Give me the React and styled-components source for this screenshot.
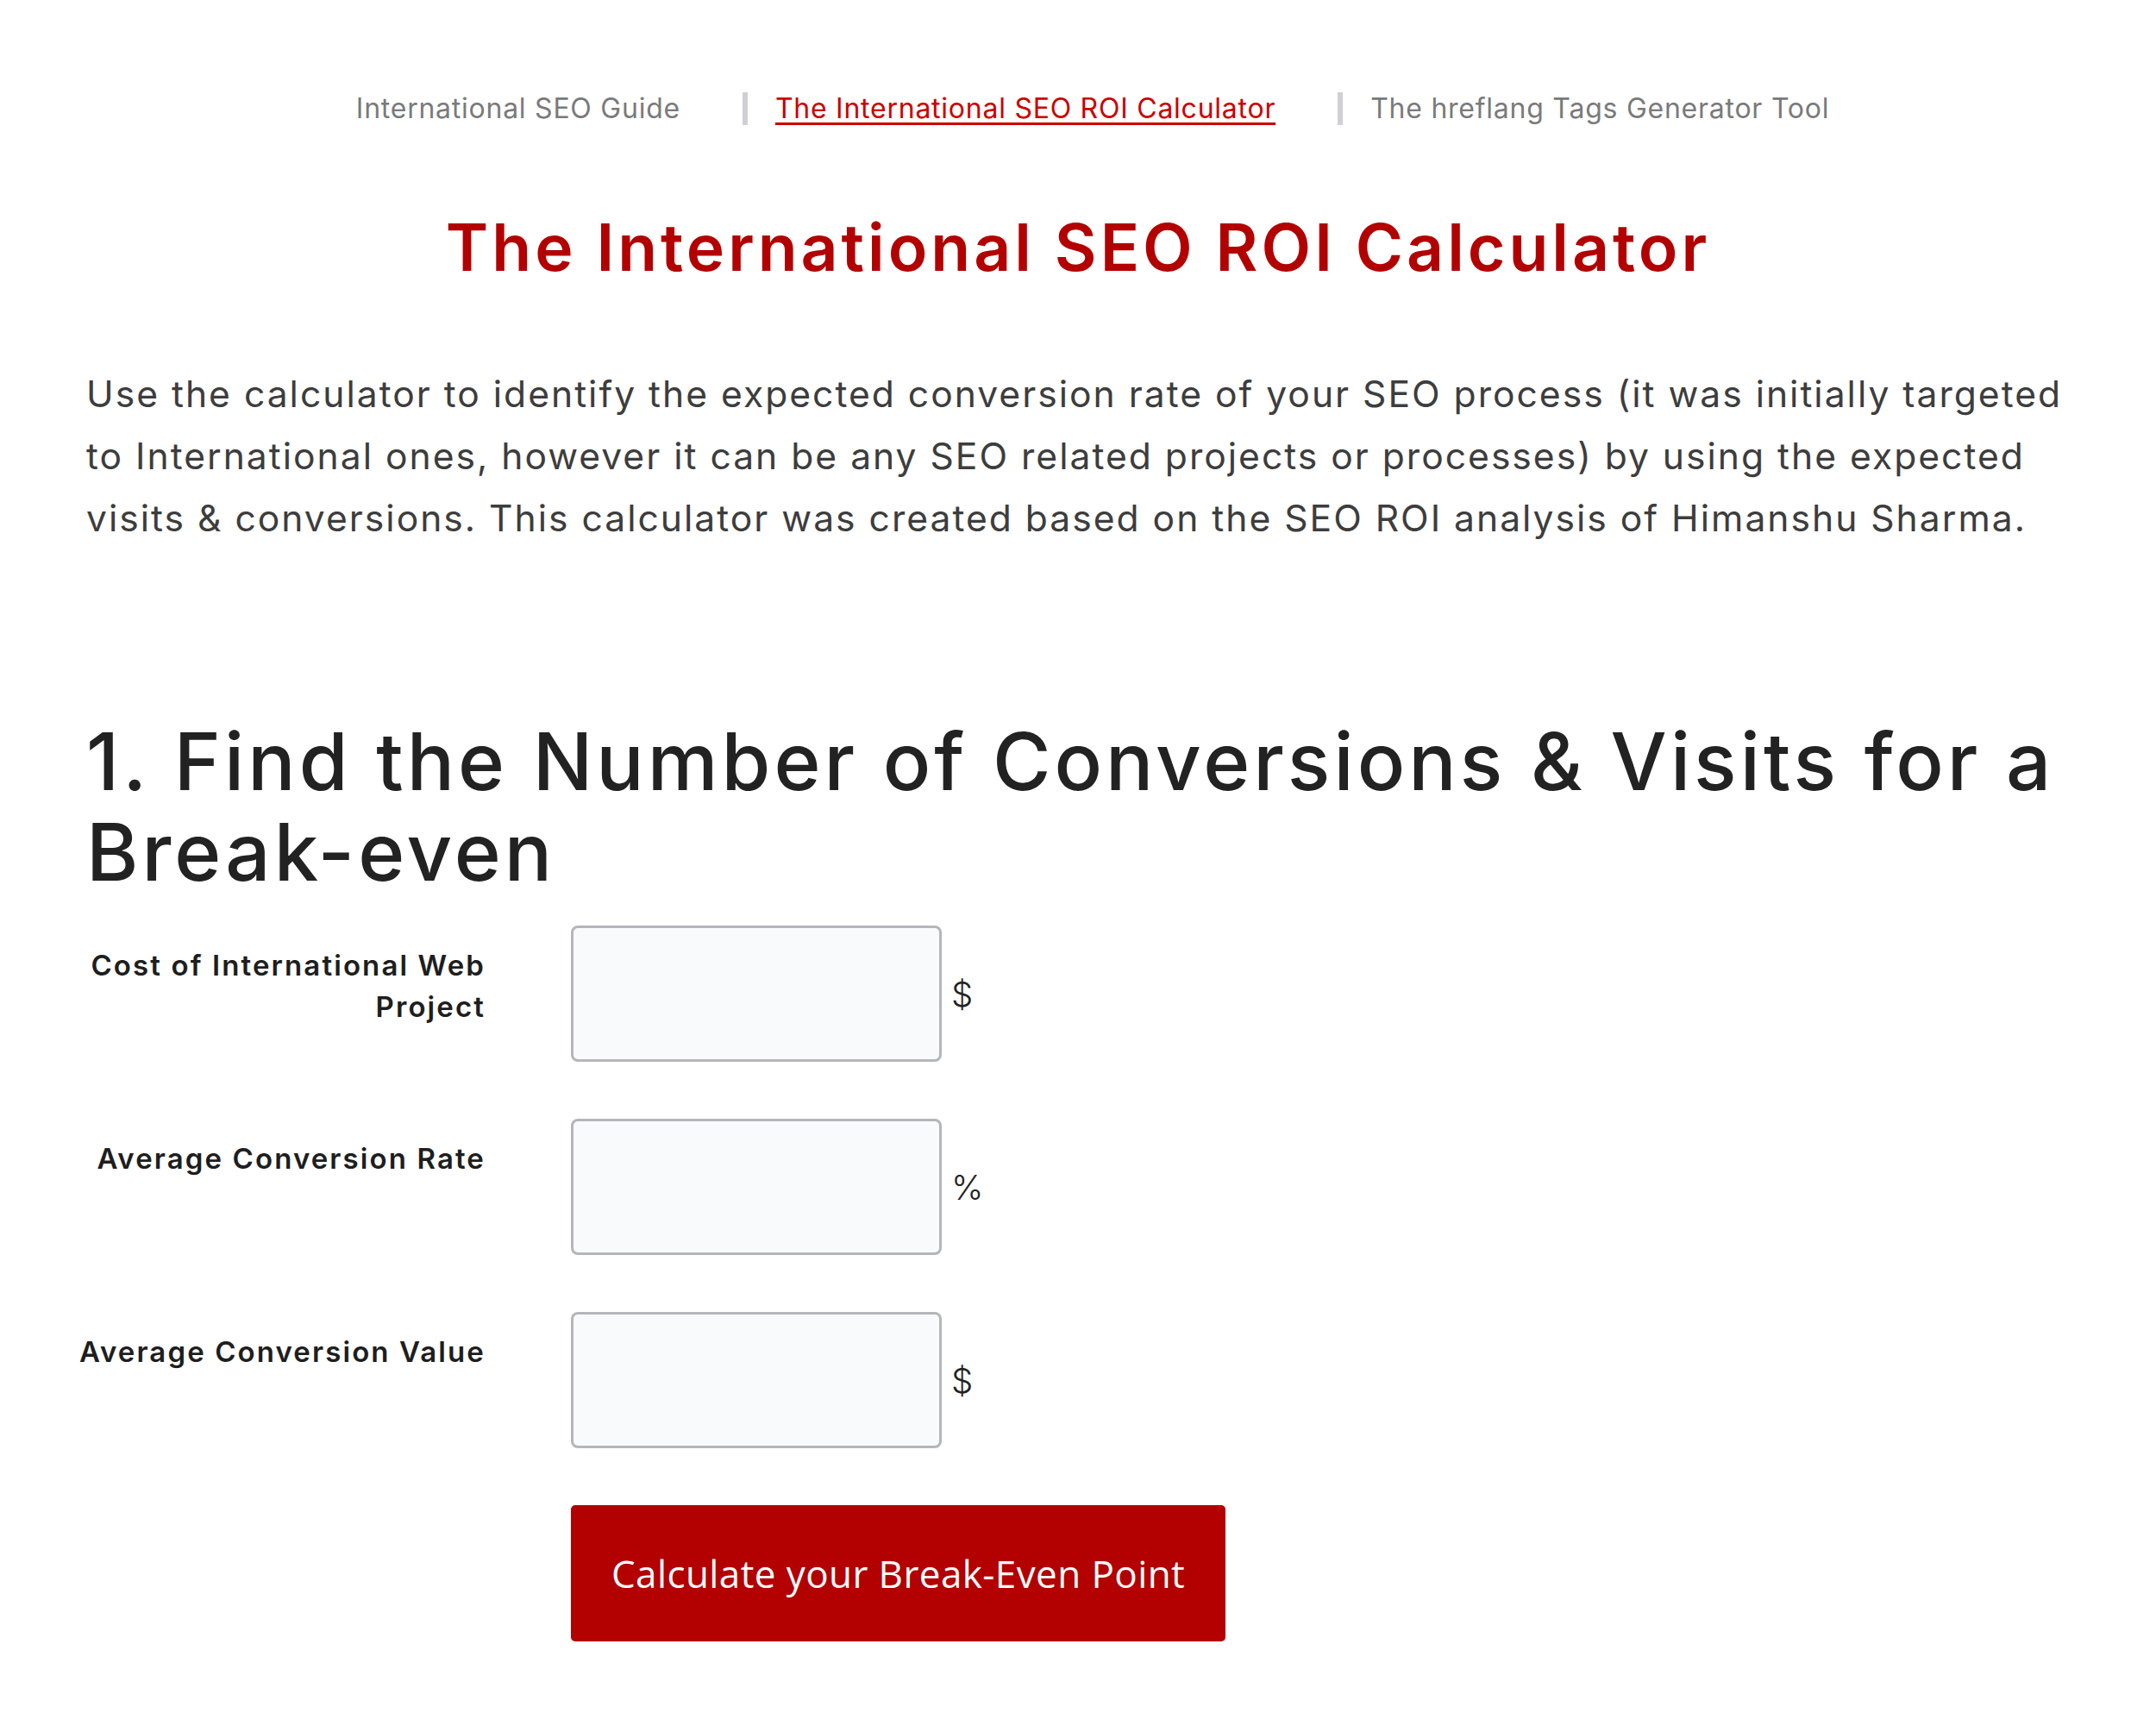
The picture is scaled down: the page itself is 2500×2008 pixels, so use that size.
import React from "react";
import styled, { createGlobalStyle } from "styled-components";

const GlobalStyle = createGlobalStyle`
  html, body {
    margin: 0;
    padding: 0;
    background: #ffffff;
  }
  body {
    font-family: Inter, "Liberation Sans", sans-serif;
    color: #222222;
  }
  * {
    box-sizing: border-box;
  }
`;

const Page = styled.main`
  padding: 0 100px 100px;
`;

const Nav = styled.nav`
  display: flex;
  justify-content: center;
  align-items: center;
  padding: 102px 0 0 34px;
`;

const NavLink = styled.a`
  font-size: 32px;
  line-height: 48px;
  font-weight: 400;
  letter-spacing: 0.75px;
  white-space: nowrap;
  color: ${(p) => (p.$active ? "#cc0000" : "#7a7a7a")};
  text-decoration: ${(p) => (p.$active ? "underline" : "none")};
  text-decoration-thickness: 3px;
  text-underline-offset: 5px;
  cursor: pointer;
`;

const NavDivider = styled.span`
  display: block;
  width: 6px;
  height: 38px;
  background: #d0d0d4;
  margin: 0 32px 0 72px;
`;

const Title = styled.h1`
  margin: 91px 0 0;
  text-align: center;
  font-size: 75px;
  line-height: 92px;
  font-weight: 600;
  letter-spacing: 4px;
  color: #b30000;
`;

const Intro = styled.p`
  margin: 88px 0 0;
  font-size: 42.6px;
  line-height: 72px;
  font-weight: 400;
  letter-spacing: 2px;
  color: #3d3d3d;
  white-space: nowrap;
`;

const SectionTitle = styled.h2`
  margin: 193px 0 0;
  font-size: 92px;
  line-height: 105px;
  font-weight: 500;
  letter-spacing: 4.05px;
  color: #222222;
  white-space: nowrap;
`;

const Form = styled.form`
  display: grid;
  grid-template-columns: 461px auto;
  column-gap: 101px;
  row-gap: 66px;
  margin-top: 33px;
  align-items: start;
`;

const Label = styled.label`
  justify-self: end;
  text-align: right;
  padding-top: 22px;
  margin-right: -2px;
  font-size: 33px;
  line-height: 48px;
  font-weight: 600;
  letter-spacing: 2.1px;
  color: #1e1e1e;
  white-space: nowrap;
`;

const Field = styled.div`
  display: flex;
  align-items: center;
  gap: 11px;
`;

const Input = styled.input`
  width: 430px;
  height: 158px;
  border: 3px solid #b4b6bb;
  border-radius: 8px;
  background: #f9fafc;
  font-size: 34px;
  padding: 0 20px;
  outline: none;
`;

const Unit = styled.span`
  font-size: 40px;
  font-weight: 300;
  color: #222222;
`;

const SubmitButton = styled.button`
  grid-column: 2;
  justify-self: start;
  height: 158px;
  padding: 0 47px;
  border: none;
  border-radius: 5px;
  background: #b30000;
  color: #ffffff;
  font-family: "Open Sans", "Liberation Sans", sans-serif;
  font-size: 44px;
  font-weight: 400;
  letter-spacing: 0.4px;
  cursor: pointer;
`;

const fields = [
  { id: "cost", label: ["Cost of International Web", "Project"], unit: "$" },
  { id: "rate", label: ["Average Conversion Rate"], unit: "%" },
  { id: "value", label: ["Average Conversion Value"], unit: "$" },
];

export default function App() {
  return (
    <>
      <GlobalStyle />
      <Page>
        <Nav>
          <NavLink>International SEO Guide</NavLink>
          <NavDivider />
          <NavLink $active>The International SEO ROI Calculator</NavLink>
          <NavDivider />
          <NavLink>The hreflang Tags Generator Tool</NavLink>
        </Nav>

        <Title>The International SEO ROI Calculator</Title>

        <Intro>
          Use the calculator to identify the expected conversion rate of your SEO process (it was initially targeted
          <br />
          to International ones, however it can be any SEO related projects or processes) by using the expected
          <br />
          visits &amp; conversions. This calculator was created based on the SEO ROI analysis of Himanshu Sharma.
        </Intro>

        <SectionTitle>
          1. Find the Number of Conversions &amp; Visits for a
          <br />
          Break-even
        </SectionTitle>

        <Form onSubmit={(e) => e.preventDefault()}>
          {fields.map((f) => (
            <React.Fragment key={f.id}>
              <Label htmlFor={f.id}>
                {f.label.map((line, i) => (
                  <React.Fragment key={line}>
                    {i > 0 && <br />}
                    {line}
                  </React.Fragment>
                ))}
              </Label>
              <Field>
                <Input id={f.id} type="text" />
                <Unit>{f.unit}</Unit>
              </Field>
            </React.Fragment>
          ))}
          <SubmitButton type="submit">Calculate your Break-Even Point</SubmitButton>
        </Form>
      </Page>
    </>
  );
}
